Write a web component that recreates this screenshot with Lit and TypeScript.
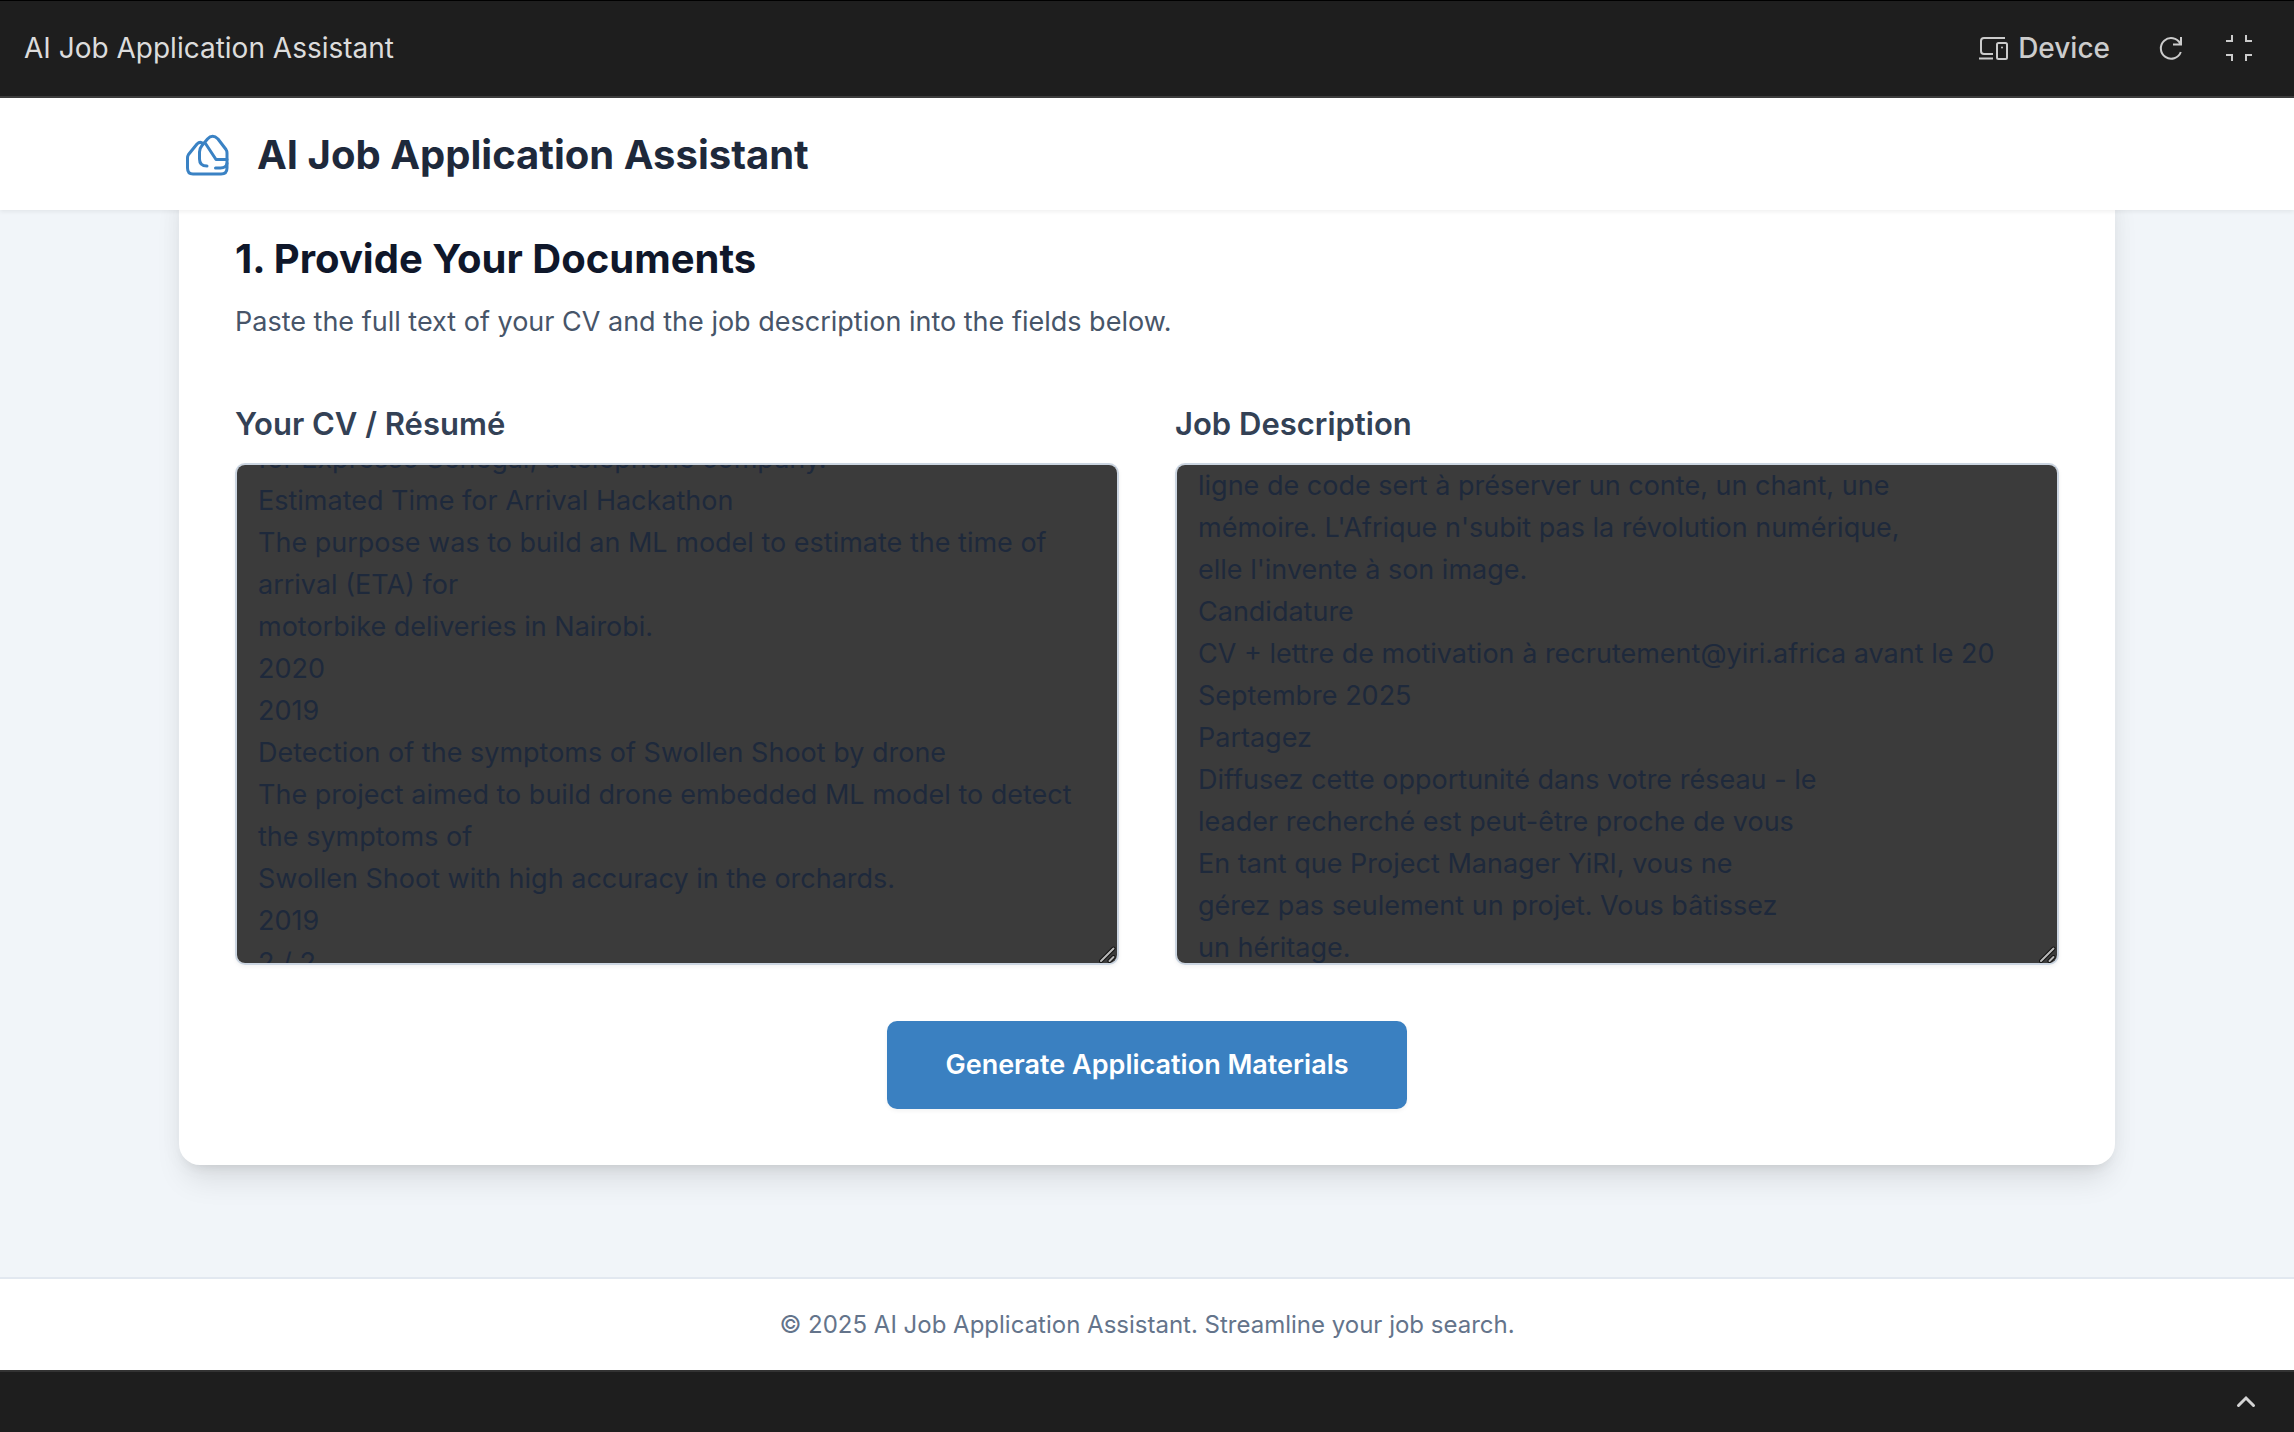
import { LitElement, html, css } from "lit";
import { customElement, query, state } from "lit/decorators.js";

const CV_TEXT = `for Expresso Senegal, a telephone company.
Estimated Time for Arrival Hackathon
The purpose was to build an ML model to estimate the time of arrival (ETA) for
motorbike deliveries in Nairobi.
2020
2019
Detection of the symptoms of Swollen Shoot by drone
The project aimed to build drone embedded ML model to detect the symptoms of
Swollen Shoot with high accuracy in the orchards.
2019
2 / 2`;

const JOB_TEXT = `ligne de code sert à préserver un conte, un chant, une
mémoire. L'Afrique n'subit pas la révolution numérique,
elle l'invente à son image.
Candidature
CV + lettre de motivation à recrutement@yiri.africa avant le 20 Septembre 2025
Partagez
Diffusez cette opportunité dans votre réseau - le
leader recherché est peut-être proche de vous
En tant que Project Manager YiRI, vous ne
gérez pas seulement un projet. Vous bâtissez
un héritage.`;

const grip = html`
  <svg class="grip" width="18" height="18" viewBox="0 0 18 18" stroke-linecap="round" aria-hidden="true">
    <path d="M2 16L14.500 3.500M10.500 16L14.500 12" stroke="#111" stroke-width="4" />
    <path d="M2 16L14.500 3.500M10.500 16L14.500 12" stroke="#b8b8b8" stroke-width="2" />
  </svg>
`;

@customElement("app-root")
export class AppRoot extends LitElement {
  static styles = css`
    :host {
      display: flex;
      flex-direction: column;
      min-height: 100vh;
      box-sizing: border-box;
      background: #f1f5f9;
      color: #1e293b;
      font-family: Inter, "Liberation Sans", sans-serif;
      font-size: 27px;
      line-height: 42px;
    }
    *,
    *::before,
    *::after {
      box-sizing: border-box;
    }
    h1,
    h2,
    p {
      margin: 0;
    }
    svg {
      display: block;
      flex: none;
      fill: none;
      stroke: currentColor;
    }
    button {
      font: inherit;
      color: inherit;
      background: none;
      border: 0;
      padding: 0;
      cursor: pointer;
    }
    .toolbar {
      display: flex;
      align-items: center;
      justify-content: space-between;
      height: 98px;
      padding: 0 38px 2px 24px;
      background: #1e1e1e;
      border-top: 1px solid #000;
      border-bottom: 2px solid #3c3c3c;
      color: #dcdcdc;
      font-size: 28px;
      position: relative;
      z-index: 2;
    }
    .tools {
      display: flex;
      align-items: center;
      color: #cccccc;
      gap: 38px;
    }
    .device {
      display: flex;
      align-items: center;
      gap: 10px;
      font-weight: 500;
      margin-right: 10px;
    }
    .header {
      position: relative;
      z-index: 1;
      background: #fff;
      box-shadow: 0 2px 4px rgba(0, 0, 0, 0.06);
    }
    .container {
      width: 100%;
      max-width: 1992px;
      margin: 0 auto;
      padding: 0 28px;
    }
    .brand {
      display: flex;
      align-items: center;
      gap: 26px;
      height: 112px;
      padding-top: 2px;
    }
    .logo {
      color: #3a82c4;
      margin-left: 4px;
    }
    .title,
    .heading {
      font-size: 40px;
      font-weight: 700;
      line-height: 56px;
    }
    .main {
      flex: 1;
      padding-bottom: 112px;
    }
    .card {
      margin-top: -35px;
      padding: 56px;
      background: #fff;
      border-radius: 21px;
      box-shadow: 0 20px 30px -6px rgba(0, 0, 0, 0.1),
        0 8px 12px -8px rgba(0, 0, 0, 0.1), 0 0 24px rgba(0, 0, 0, 0.04);
    }
    .heading {
      color: #0f172a;
    }
    .intro {
      color: #475569;
      margin-top: 14px;
    }
    .fields {
      display: grid;
      grid-template-columns: 1fr 1fr;
      gap: 56px;
      margin-top: 58px;
    }
    .field {
      display: flex;
      flex-direction: column;
      gap: 16px;
    }
    .label {
      font-size: 31px;
      font-weight: 600;
      line-height: 46px;
      color: #334155;
    }
    .box {
      position: relative;
    }
    .area {
      display: block;
      width: 100%;
      height: 502px;
      margin: 0;
      padding: 21px;
      border: 2px solid #cbd5e1;
      border-radius: 10px;
      background: #3b3b3b;
      color: #1e293b;
      font: inherit;
      resize: none;
      outline: none;
      scrollbar-width: none;
      box-shadow: 0 2px 4px rgba(0, 0, 0, 0.05);
    }
    .grip {
      position: absolute;
      right: 2px;
      bottom: 2px;
      pointer-events: none;
    }
    .actions {
      display: flex;
      justify-content: center;
      margin-top: 56px;
    }
    .primary {
      padding: 23px 58px;
      border-radius: 10px;
      background: #3a80c1;
      color: #fff;
      font-weight: 600;
      box-shadow: 0 2px 4px rgba(0, 0, 0, 0.05);
    }
    .footer {
      padding: 28px;
      background: #fff;
      border-top: 2px solid #e2e8f0;
      color: #64748b;
      font-size: 24px;
      line-height: 35px;
      text-align: center;
    }
    .console {
      display: flex;
      align-items: center;
      justify-content: flex-end;
      height: 62px;
      padding: 0 36px;
      background: #1e1e1e;
      border-top: 2px solid #333;
      color: #d4d4d4;
    }
  `;

  @query("#cv") private cvArea!: HTMLTextAreaElement;
  @query("#job") private jobArea!: HTMLTextAreaElement;
  @state() private cv = CV_TEXT;
  @state() private job = JOB_TEXT;

  firstUpdated() {
    this.cvArea.scrollTop = 48;
    this.jobArea.scrollTop = 21;
  }

  render() {
    return html`
      <div class="toolbar">
        <span>AI Job Application Assistant</span>
        <div class="tools">
          <button class="device">
            <svg width="30" height="26" viewBox="0 0 30 26" stroke-width="2" aria-hidden="true">
              <path d="M27 3H6Q3 3 3 6V16Q3 19 6 19H15M1 23.500H15" />
              <rect x="19" y="8" width="10" height="16" rx="1.500" />
              <circle cx="24" cy="12.500" r="1" fill="currentColor" stroke="none" />
            </svg>
            Device
          </button>
          <button aria-label="Refresh">
            <svg width="26" height="26" viewBox="0 0 26 26" stroke-width="2" aria-hidden="true">
              <path d="M22.800 17A10.300 10.300 0 1 1 22.200 8.500M23 2V9.500H15" />
            </svg>
          </button>
          <button aria-label="Exit full screen">
            <svg width="34" height="26" viewBox="-4 0 34 26" stroke-width="2" aria-hidden="true">
              <path d="M0 6H6V0M20 0V6H26M26 20H20V26M6 26V20H0" />
            </svg>
          </button>
        </div>
      </div>

      <header class="header">
        <div class="container brand">
          <svg class="logo" width="48" height="48" viewBox="0 0 48 48" stroke-width="3" stroke-linecap="round" stroke-linejoin="round" aria-hidden="true">
            <path d="M20 12.500Q17 10 14 13L5.500 23.500Q4.500 25 4.500 27V37Q4.500 43 10 43H38Q44 43 44 37V22Q44 20 43 18.500L35 8Q29.500 2.500 24.500 8L19 14.500Q16.500 17.500 16.500 21V28Q16.500 35 24 35" />
            <path d="M22.500 12.500L33 28.500H44M32.500 37H37.500Q43 37 44 32.500" />
          </svg>
          <h1 class="title">AI Job Application Assistant</h1>
        </div>
      </header>

      <main class="main container">
        <section class="card">
          <h2 class="heading">1. Provide Your Documents</h2>
          <p class="intro">Paste the full text of your CV and the job description into the fields below.</p>
          <div class="fields">
            <div class="field">
              <label class="label" for="cv">Your CV / Résumé</label>
              <div class="box">
                <textarea class="area" id="cv" spellcheck="false" .value=${this.cv}
                  @input=${(e: Event) => (this.cv = (e.target as HTMLTextAreaElement).value)}></textarea>
                ${grip}
              </div>
            </div>
            <div class="field">
              <label class="label" for="job">Job Description</label>
              <div class="box">
                <textarea class="area" id="job" spellcheck="false" .value=${this.job}
                  @input=${(e: Event) => (this.job = (e.target as HTMLTextAreaElement).value)}></textarea>
                ${grip}
              </div>
            </div>
          </div>
          <div class="actions">
            <button class="primary">Generate Application Materials</button>
          </div>
        </section>
      </main>

      <footer class="footer">© 2025 AI Job Application Assistant. Streamline your job search.</footer>

      <div class="console">
        <button aria-label="Expand console">
          <svg width="24" height="24" viewBox="0 0 24 24" stroke-width="3" stroke-linecap="round" aria-hidden="true">
            <path d="M4.500 15.500L12 8L19.500 15.500" />
          </svg>
        </button>
      </div>
    `;
  }
}
